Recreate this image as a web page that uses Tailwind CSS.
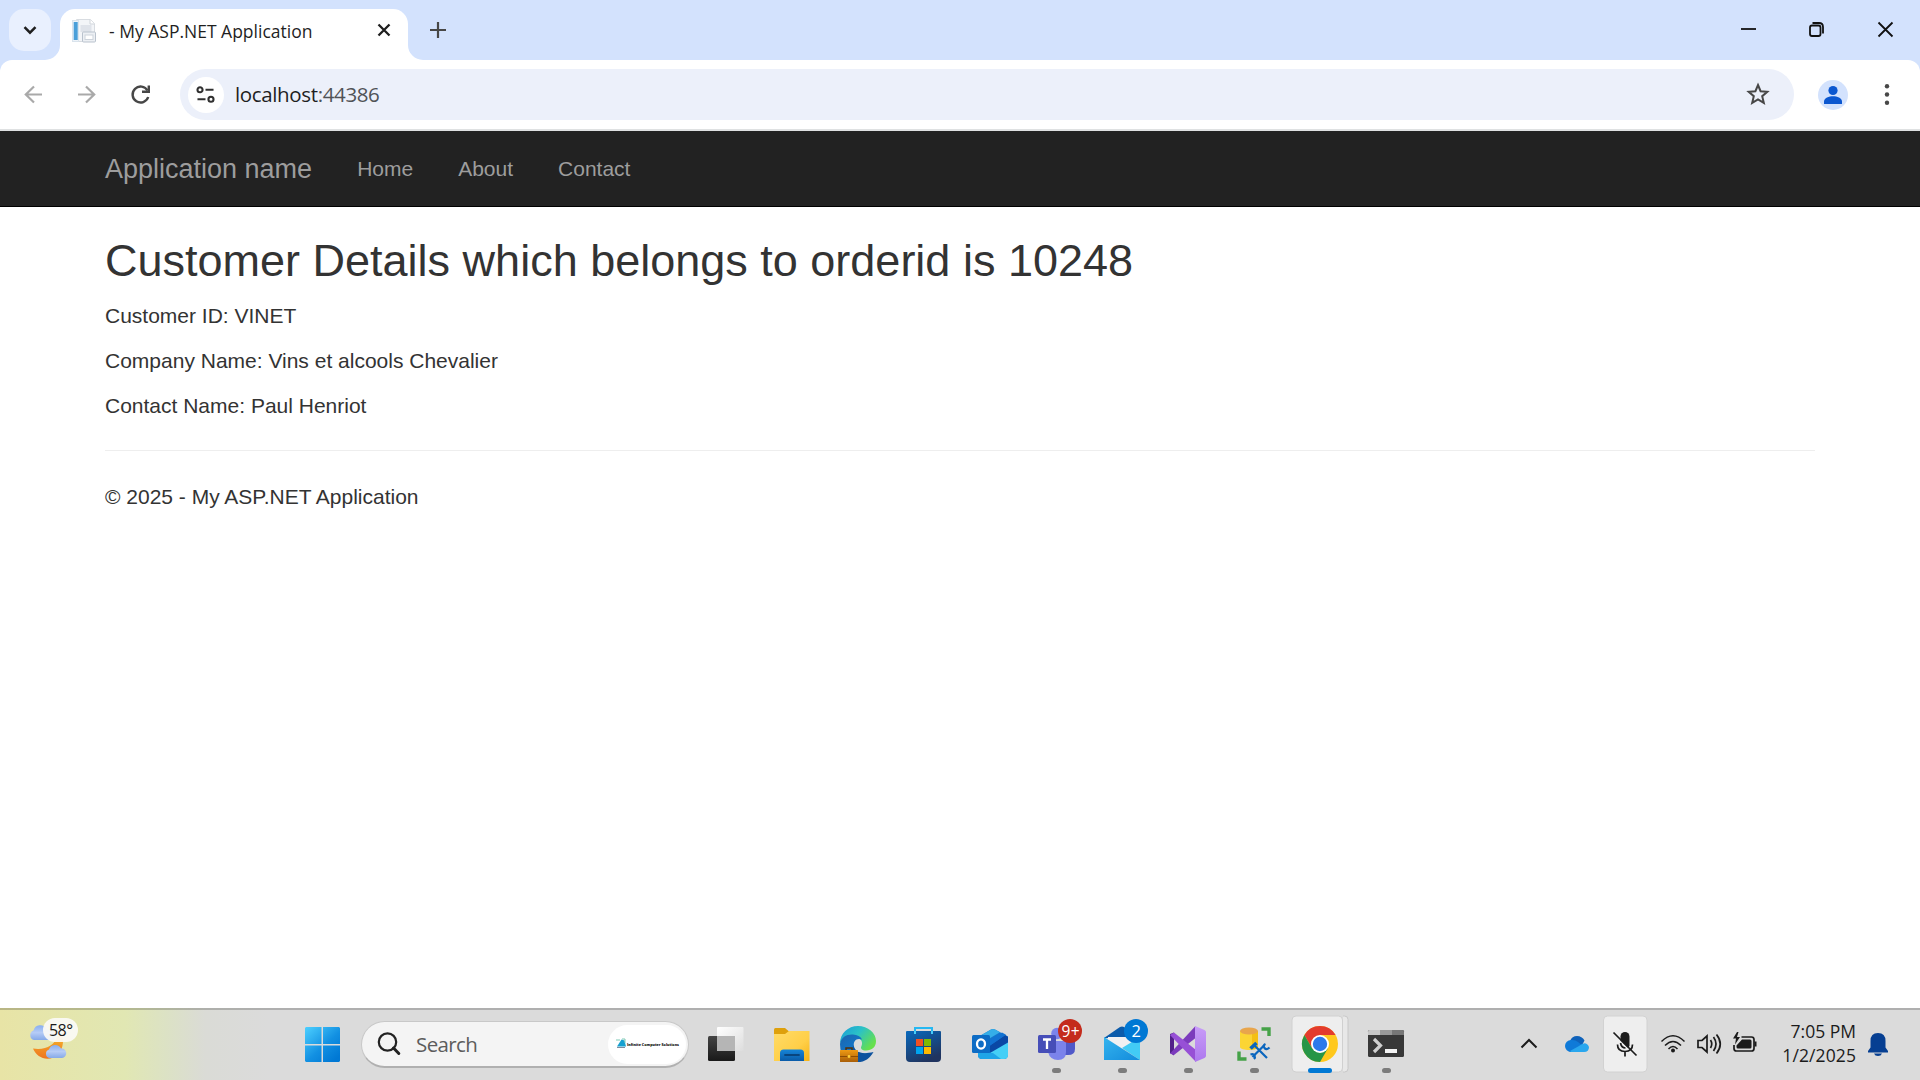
<!DOCTYPE html>
<html lang="en">
<head>
<meta charset="utf-8">
<title>- My ASP.NET Application</title>
<script src="https://cdn.jsdelivr.net/npm/@tailwindcss/browser@4"></script>
</head>
<body class="flex h-[1080px] w-[1920px] flex-col overflow-hidden bg-white font-['Open_Sans','Noto_Sans',sans-serif]">

<!-- Tab strip -->
<header class="flex h-[60px] shrink-0 bg-[#d3e2fd] pl-[9px]">
  <button class="mt-[9px] flex h-[42px] w-[42px] shrink-0 items-center justify-center rounded-[15px] bg-[#e9f0fe]">
    <svg class="h-3 w-4" viewBox="0 0 16 12" fill="none" stroke="#1f1f1f" stroke-width="2.5"><path d="M2.5 3.2 8 8.7l5.500-5.500"/></svg>
  </button>
  <svg class="-ml-[6px] h-[60px] w-[15px] shrink-0" viewBox="0 0 15 60"><path d="M15 45v15H0A15 15 0 0 0 15 45Z" fill="#fff"/></svg>
  <div class="mt-[9px] flex h-[51px] w-[348px] shrink-0 items-center rounded-t-[15px] bg-white pl-3 pr-[17px]">
    <svg class="-mt-[7px] h-6 w-6 shrink-0" viewBox="0 0 24 24">
      <path d="M4.500.500h14l4 4v18h-18z" fill="#f3f5f8" stroke="#d8dce1"/>
      <path d="M18 .500v4.500h4.500" fill="#fff" stroke="#cfd4da"/>
      <rect x=".5" y="1.500" width="6" height="21" fill="#edf3f9" stroke="#d9e3ec"/>
      <rect x="1.700" y="3" width="4" height="18" fill="#4a9fd9"/>
      <rect x="8.500" y="6" width="11" height="7" fill="#dfe3ea"/>
      <rect x="10.500" y="13" width="13" height="10" rx="1" fill="#edf0f4" stroke="#b9c2cd"/>
      <rect x="13" y="16" width="8" height="4.500" fill="#fff" stroke="#cdd3db"/>
    </svg>
    <span class="-mt-[6px] ml-[13px] flex-1 whitespace-nowrap text-[17.500px] text-[#1f1f1f]">- My ASP.NET Application</span>
    <svg class="-mt-[9px] h-[14px] w-[14px]" viewBox="0 0 14 14" stroke="#1f1f1f" stroke-width="2.300"><path d="m1.500 1.500 11 11m0-11-11 11"/></svg>
  </div>
  <svg class="h-[60px] w-[15px] shrink-0" viewBox="0 0 15 60"><path d="M0 45v15h15A15 15 0 0 1 0 45Z" fill="#fff"/></svg>
  <svg class="ml-[7px] mt-[22px] h-4 w-4" viewBox="0 0 16 16" stroke="#474747" stroke-width="2.200"><path d="M8 0v16M0 8h16"/></svg>
  <svg class="ml-auto h-[60px] w-[200px]" viewBox="1720 0 200 60" fill="none" stroke="#111" stroke-width="1.800">
    <path d="M1741 29h15"/>
    <rect x="1810" y="25.500" width="10.500" height="10.500" rx="2"/>
    <path d="M1812.500 23h6.500q4 0 4 4v6.500"/>
    <path d="m1878.500 22.500 14 14m0-14-14 14"/>
  </svg>
</header>

<!-- Toolbar -->
<div class="shrink-0 bg-[#d3e2fd]">
  <div class="flex h-[71px] items-start rounded-t-[12px] border-b-2 border-[#dfe1e2] bg-white pt-[9px]">
    <svg class="h-[50px] w-[180px] shrink-0" viewBox="0 69 180 50" fill="none" stroke-width="2.200">
      <path d="M42 94.500H26m8-8-8.200 8 8.200 8" stroke="#a9a9a9"/>
      <path d="M78 94.500h16m-8-8 8.200 8-8.200 8" stroke="#a9a9a9"/>
      <path d="M147.500 90.500a8 8 0 1 0 .700 6.500" stroke="#474747" stroke-width="2.400"/>
      <path d="M148.800 85.500v6.300h-6.800" stroke="#474747" stroke-width="2.400"/>
    </svg>
    <div class="flex h-[51px] w-[1614px] items-center rounded-full bg-[#ecf0fa] pl-2 pr-6">
      <div class="flex h-9 w-9 shrink-0 items-center justify-center rounded-full bg-white">
        <svg class="mr-px h-[17px] w-[19px]" viewBox="0 0 20 18" fill="none" stroke="#303030" stroke-width="2.200"><circle cx="4.200" cy="4" r="2.700"/><path d="M10 4h8.500M1.500 14H10"/><circle cx="15.800" cy="14" r="2.700"/></svg>
      </div>
      <div class="ml-[11px] flex-1 text-[20.500px] tracking-[-0.360px] text-[#1f1f1f]">localhost<span class="text-[#505357]">:44386</span></div>
      <svg class="-mt-px h-6 w-6" viewBox="0 0 24 24" fill="none" stroke="#474747" stroke-width="2"><path d="m12 3 2.600 6.200 6.700.600-5.100 4.400 1.600 6.600L12 17.300l-5.800 3.500 1.600-6.600-5.100-4.400 6.700-.600Z"/></svg>
    </div>
    <svg class="h-[50px] w-[126px] shrink-0" viewBox="1794 69 126 50">
      <circle cx="1833" cy="95" r="15" fill="#d3e2fd"/>
      <circle cx="1833" cy="90.500" r="4.600" fill="#0b57d0"/>
      <path d="M1824 104v-2.500c0-3.500 5-5.200 9-5.200s9 1.700 9 5.200v2.500z" fill="#0b57d0"/>
      <g fill="#474747"><circle cx="1887" cy="86.300" r="2.200"/><circle cx="1887" cy="94.500" r="2.200"/><circle cx="1887" cy="102.800" r="2.200"/></g>
    </svg>
  </div>
</div>

<!-- Page -->
<div class="flex min-h-0 flex-1 flex-col font-['Liberation_Sans',Arial,sans-serif] text-[21px] leading-[30px] text-[#333]">
  <nav class="flex h-[76px] shrink-0 items-center border-b border-black bg-[#222] pl-[105px] text-[#9d9d9d]">
    <a class="text-[27px]">Application name</a>
    <a class="ml-[45px]">Home</a>
    <a class="ml-[45px]">About</a>
    <a class="ml-[45px]">Contact</a>
  </nav>
  <main class="px-[105px]">
    <h2 class="mt-[29px] text-[45px] leading-[49px]">Customer Details which belongs to orderid is 10248</h2>
    <p class="mt-4">Customer ID: VINET</p>
    <p class="mt-[15px]">Company Name: Vins et alcools Chevalier</p>
    <p class="mt-[15px]">Contact Name: Paul Henriot</p>
    <hr class="mt-[29px] border-[#eee]">
    <footer class="mt-[31px]">© 2025 - My ASP.NET Application</footer>
  </main>
</div>

<!-- Taskbar -->
<div class="flex h-[72px] shrink-0 border-t-2 border-black/20 bg-[#dbdbdb] bg-[linear-gradient(90deg,#e8e4a6_0px,#e1e7b3_125px,#dce2c4_165px,#dadbd6_205px,#dbdbdb_270px)]">
  <svg class="h-[70px] w-[292px] shrink-0" viewBox="0 1010 292 70">
    <defs>
      <linearGradient id="cloud" x2="0" y2="1"><stop stop-color="#88aef0"/><stop offset=".5" stop-color="#b6ccf6"/><stop offset="1" stop-color="#86a9e8"/></linearGradient>
      <linearGradient id="moon" x2="0" y2="1"><stop stop-color="#f5b32a"/><stop offset="1" stop-color="#ee7420"/></linearGradient>
    </defs>
    <path d="M34 1040a5 5 0 0 1-.500-9.500 7 7 0 0 1 13-1.500l8 3v8z" fill="url(#cloud)"/>
    <path d="M62.500 1036c2 10-2 18-9 21.500-9 3.500-17-1-20.500-9 12 2 22-3 24-12.500z" fill="url(#moon)"/>
    <path d="M49 1058a4.500 4.500 0 0 1 0-8.500 6.500 6.500 0 0 1 12-1 4.700 4.700 0 0 1 1 9.500z" fill="url(#cloud)"/>
    <rect x="43" y="1018" width="35" height="24" rx="12" fill="#fbfaf6" fill-opacity=".93"/>
    <text x="49" y="1036" font-size="16" textLength="24" fill="#1a1a1a">58°</text>
  </svg>
  <svg class="h-[70px] w-[69px] shrink-0" viewBox="292 1010 69 70">
    <defs><linearGradient id="win" gradientUnits="userSpaceOnUse" x1="305" y1="1027" x2="335" y2="1060"><stop stop-color="#4dd0ff"/><stop offset=".6" stop-color="#1290e2"/><stop offset="1" stop-color="#0078d4"/></linearGradient></defs>
    <path d="M306 1027h15.500v17H305v-16zM323 1027h16l1 1v16h-17zM305 1045.500h16.500v16.500H306l-1-1zM323 1045.500h17v15.500l-1 1h-16z" fill="url(#win)"/>
  </svg>
  <div class="mt-[11px] flex h-[47px] w-[328px] shrink-0 items-center rounded-full border border-b-2 border-[#c8c8c8] border-b-[#b0b0b0] bg-[#f4f4f4] pl-[15px] pr-[2px]">
    <svg class="h-6 w-6" viewBox="0 0 24 24" fill="none" stroke="#222"><circle cx="10.500" cy="10" r="8.700" stroke-width="2.200"/><path d="m16.500 16 5.300 5.500" stroke-width="3" stroke-linecap="round"/></svg>
    <span class="ml-[15px] flex-1 text-[20.500px] tracking-[-0.600px] text-[#5c5c5c]">Search</span>
    <div class="flex h-[39px] w-[78px] items-center rounded-full bg-white pl-2">
      <svg class="h-5 w-[69px] overflow-visible" viewBox="616 1035 69 20">
        <path d="m621.500 1040.500-4.500 7h9l-1.500-6z" fill="#16a0d0"/><path d="M616 1041h4m2-1h3v4" fill="none" stroke="#7cc9b4"/><path d="M617 1048.500h8" stroke="#7d8ca0"/>
        <text x="627" y="1046.500" font-size="4.200" font-weight="800" textLength="52" lengthAdjust="spacingAndGlyphs" fill="#111">Infinite Computer Solutions</text>
      </svg>
    </div>
  </div>
  <div class="ml-[3px] flex shrink-0">
    <svg class="h-[70px] w-[66px]" viewBox="692 1010 66 70">
      <defs><linearGradient id="tvd" x2="0" y2="1"><stop stop-color="#444"/><stop offset="1" stop-color="#191919"/></linearGradient><linearGradient id="tvl" x2="1" y2="1"><stop stop-color="#fff"/><stop offset="1" stop-color="#ddd"/></linearGradient></defs>
      <rect x="708" y="1036" width="27" height="25" rx="1.500" fill="url(#tvd)"/><rect x="717" y="1027" width="26.500" height="24" rx="1" fill="url(#tvl)"/><path d="M717 1036h18v15h-18z" fill="#b5b5b5"/>
    </svg>
    <svg class="h-[70px] w-[66px]" viewBox="758 1010 66 70">
      <defs><linearGradient id="fold" x2="1" y2="1"><stop stop-color="#ffdb68"/><stop offset=".6" stop-color="#ffcf48"/><stop offset="1" stop-color="#f6b315"/></linearGradient><linearGradient id="fb" x2="0" y2="1"><stop stop-color="#1685d8"/><stop offset="1" stop-color="#0a5ba8"/></linearGradient></defs>
      <path d="M774 1036v-6.500q0-1.500 1.500-1.500H785l4 3.500v4.500z" fill="#dea00c"/><path d="M774 1034h11l4-3h20.500v30H774z" fill="url(#fold)"/>
      <path d="M780 1061v-8q0-3.500 3.500-3.500h17q3.500 0 3.500 3.500v8z" fill="url(#fb)"/><path d="M785 1055h14" stroke="#09457e" stroke-width="1.800" stroke-linecap="round"/>
    </svg>
    <svg class="h-[70px] w-[66px]" viewBox="824 1010 66 70">
      <defs><linearGradient id="e1" x2="1" y2=".6"><stop stop-color="#189bd8"/><stop offset=".5" stop-color="#2bc1c7"/><stop offset="1" stop-color="#66e04c"/></linearGradient><linearGradient id="e2" x2=".8" y2="1"><stop stop-color="#1c65ad"/><stop offset="1" stop-color="#0d82dc"/></linearGradient><linearGradient id="bag" x2="0" y2="1"><stop stop-color="#ee9a13"/><stop offset="1" stop-color="#a95e08"/></linearGradient></defs>
      <path d="M858 1026c10 0 18 7 18 15 0 6-4 9.500-10 9.500-4 0-6-2-4.500-4.500 1.500-3.500 0-7-4-8-6-2-14-1-17.500 5.500 0-10 8-17.500 18-17.500z" fill="url(#e1)"/>
      <path d="M840 1044c1-7 7-10 13-9.500 4 .200 8 2 9 5-6-2-9 2-8 7 1 5 6 7.500 12 7l-5 7h-15q-6-7-6-16.500z" fill="url(#e2)"/>
      <path d="M853 1045c2 7 8 10 20.500 7-4 7-9 10.500-17.500 10h-4z" fill="#0d529e"/>
      <path d="M846 1050v-2h6v2" fill="none" stroke="#543008" stroke-width="1.500"/><rect x="840" y="1050" width="18" height="12" rx=".5" fill="url(#bag)"/><path d="M840 1056.500h18" stroke="#8d4d04"/><circle cx="849" cy="1056.500" r="1.400" fill="#ffd13a"/>
    </svg>
    <svg class="h-[70px] w-[66px]" viewBox="890 1010 66 70">
      <defs><linearGradient id="st" x2=".5" y2="1"><stop stop-color="#0869bd"/><stop offset="1" stop-color="#20345f"/></linearGradient></defs>
      <path d="M915 1034v-6h17v6" fill="none" stroke="#25b8f2" stroke-width="2"/><path d="M906 1032q0-1 1-1h33q1 0 1 1v26q0 4-4 4h-27q-4 0-4-4z" fill="url(#st)"/><path d="M915 1031v3m17-3v3" stroke="#48cdf8" stroke-width="2"/>
      <path d="M916 1039h7v7h-7z" fill="#f25022"/><path d="M924 1039h7v7h-7z" fill="#7fba00"/><path d="M916 1047h7v7h-7z" fill="#00a4ef"/><path d="M924 1047h7v7h-7z" fill="#ffb900"/>
    </svg>
    <svg class="h-[70px] w-[66px]" viewBox="956 1010 66 70">
      <path d="M978 1037l13-7.500q2-1 4 0l13 7v17.500q0 5-4 5h-22q-4 0-4-4z" fill="#1475cc"/><path d="m979 1036.500 12-7q2-1 4 0l5 2.800-17 10z" fill="#35aee8"/>
      <path d="m988 1047 17-12 3 2v7l-17 10z" fill="#0a48a5"/><path d="m987 1042 15-9.500 4 2.300-17 11.500z" fill="#1272d2"/>
      <path d="m990 1053 18-10.500v12.500q0 4-4 4h-14z" fill="#45cff6"/><path d="M978 1053h15l8 6h-19q-4 0-4-4z" fill="#1fa5e8"/>
      <rect x="972" y="1035" width="18" height="18" rx="1.500" fill="#0d6cc5"/><ellipse cx="981" cy="1044" rx="4" ry="4.700" fill="none" stroke="#fff" stroke-width="2.300"/>
    </svg>
    <svg class="h-[70px] w-[66px]" viewBox="1022 1010 66 70">
      <circle cx="1057" cy="1033.500" r="5.800" fill="#7b83eb"/><path d="M1059 1041h16v8q0 6-7 6h-7z" fill="#5059c9"/><path d="M1048 1041h18v11q0 8-8 8t-10-8z" fill="#7b83eb"/>
      <rect x="1038" y="1035" width="18" height="18" rx="1.500" fill="#464eb8"/><path d="M1043 1039.500h8m-4 0v9.500" stroke="#fff" stroke-width="2.300"/>
      <circle cx="1070" cy="1031" r="12" fill="#c42b1c"/><text x="1061.500" y="1036.500" font-size="15.500" textLength="18" fill="#fff">9+</text><rect x="1052" y="1068" width="9" height="5" rx="2.500" fill="#7c7c7c"/>
    </svg>
    <svg class="h-[70px] w-[66px]" viewBox="1088 1010 66 70">
      <defs><linearGradient id="ml" x2="1" y2="1"><stop stop-color="#35b4ee"/><stop offset="1" stop-color="#128bdc"/></linearGradient></defs>
      <path d="m1104 1038 16-11q2-1 4 0l16 11z" fill="#0b5bab"/><path d="M1108 1037h28v12h-28z" fill="#f0f0f2"/><path d="m1140 1037-18 11 18 12z" fill="#42cbf5"/><path d="m1104 1037 36 23h-36z" fill="url(#ml)"/>
      <circle cx="1136" cy="1031" r="12" fill="#0078d4"/><text x="1131.500" y="1037" font-size="16.500" fill="#fff">2</text><rect x="1118" y="1068" width="9" height="5" rx="2.500" fill="#7c7c7c"/>
    </svg>
    <svg class="h-[70px] w-[66px]" viewBox="1154 1010 66 70">
      <defs><linearGradient id="vs" x2="0" y2="1"><stop stop-color="#c89cf8"/><stop offset="1" stop-color="#ad78ee"/></linearGradient></defs>
      <path d="m1170 1034 4-1.500v23l-4-2.500z" fill="#52218a"/><path d="m1170 1053.500 25.500-27.500v12L1174 1055z" fill="#7c3bbd"/><path d="m1170 1035 4-2.500 22 17.500v12z" fill="#9750d6"/><path d="m1195 1026 9.500 4q1.500 1 1.500 2v24q0 1-1.500 2l-9.500 4z" fill="url(#vs)"/><rect x="1184" y="1068" width="9" height="5" rx="2.500" fill="#7c7c7c"/>
    </svg>
    <svg class="h-[70px] w-[66px]" viewBox="1220 1010 66 70">
      <path d="M1240 1031v16c0 4 18 4 18 0v-16z" fill="#fbd534"/><path d="M1252 1031h6v16q-1 2-6 2.500z" fill="#f4bf14"/><ellipse cx="1249" cy="1031" rx="9" ry="3.500" fill="#e8a54c"/>
      <path d="M1261.500 1029h7.500v7M1239 1051.500v7.500h7.500" fill="none" stroke="#45a248" stroke-width="3.400"/>
      <g fill="none" stroke="#0b66be" stroke-width="2.200"><path d="m1252.500 1057 11.500-11.500M1254.500 1045.500l12.500 12.500"/><path d="m1250.500 1048.500 6-5.500" stroke-width="3.600"/><path d="M1265.500 1044q-3 1.500-1 4t5-.500M1250.500 1054.500q3-1 4 1t-.500 3.500"/></g>
      <rect x="1250" y="1068" width="9" height="5" rx="2.500" fill="#7c7c7c"/>
    </svg>
    <svg class="h-[70px] w-[66px]" viewBox="1286 1010 66 70">
      <path d="M1343 1016h1.500q3.500 0 3.500 3.500v49q0 3.500-3.500 3.500h-1.500" fill="#e8e8e8" stroke="#c8c8c8"/><rect x="1292" y="1016" width="50.500" height="56" rx="4" fill="#eee" stroke="#d0d0d0"/>
      <circle cx="1320" cy="1044" r="18" fill="#ffc81d"/><path d="M1304.400 1035A18 18 0 0 1 1335.600 1035H1320L1312.200 1048.500Z" fill="#e33b2e"/><path d="M1304.400 1035A18 18 0 0 0 1320 1062L1327.800 1048.500 1312.200 1048.500Z" fill="#269547"/>
      <circle cx="1320" cy="1044" r="9" fill="#fff"/><circle cx="1320" cy="1044" r="7.200" fill="#2d79eb"/><rect x="1308" y="1068" width="24" height="5" rx="2.500" fill="#0078d4"/>
    </svg>
    <svg class="h-[70px] w-[66px]" viewBox="1352 1010 66 70">
      <rect x="1368" y="1030" width="36" height="27" rx="1.500" fill="#383838"/><path d="M1368 1031.500q0-1.500 1.500-1.500H1380v5h-12z" fill="#c7c7c7"/><path d="M1380 1030h12v5h-12z" fill="#999"/><path d="M1392 1030h10.500q1.500 0 1.500 1.500v3.500h-12z" fill="#777"/>
      <path d="m1374 1039 6.500 6.500-6.500 6.500" fill="none" stroke="#d0d0d0" stroke-width="3.200"/><path d="M1385 1051h12" stroke="#f4f4f4" stroke-width="4"/><rect x="1382" y="1068" width="9" height="5" rx="2.500" fill="#7c7c7c"/>
    </svg>
  </div>
  <svg class="ml-auto h-[70px] w-[270px] shrink-0" viewBox="1500 1010 270 70" fill="none" stroke="#1b1b1b" stroke-width="1.700">
    <path d="m1521.500 1047.500 7.500-7.500 7.500 7.500" stroke-width="2"/>
    <g stroke="none"><path d="M1571 1052a6 6 0 0 1-1-11q2-5 7-5t7.500 4.500l-6 11.500z" fill="#0f62ba"/><path d="M1571 1052a6 6 0 0 1 0-12q4-.500 7 2l5 4-8 6z" fill="#0f7ad8"/><path d="m1570 1051 9-5q7-6 10 1 0 5-5 5h-13z" fill="#2aa7ee"/></g>
    <rect x="1603.500" y="1016" width="43.500" height="56" rx="4" fill="#eee" stroke="#d2d2d2" stroke-width="1"/>
    <path d="M1620.500 1036.500a4.500 4.500 0 0 1 9 0v9q0 2-2 2l-7-7z" fill="#1b1b1b" stroke="none"/><path d="M1617.500 1044.500q0 7 7.500 7t7.500-7M1625 1052v4.500M1613.500 1032.500l23 23"/>
    <path d="M1620.500 1043q1 5 5 5" />
    <path d="M1661.500 1041.500q11.500-11.500 23 0M1665 1045.500q8-8 16 0M1668.500 1049q4.500-5 9 0" stroke-width="1.500"/><circle cx="1673" cy="1050.500" r="2" fill="#1b1b1b" stroke="none"/>
    <path d="M1698 1040.500h4l5-4.500v16l-5-4.500h-4zM1710.500 1040q2.500 4 0 8M1713.500 1037q5 7 0 14M1716.500 1034.500q7.500 9.500 0 19"/>
    <path d="M1741.500 1037h10q2.500 0 2.500 2.500v9q0 2.500-2.500 2.500h-15q-2.500 0-2.500-2.500v-3.500"/><path d="M1742 1039.500h8q1.500 0 1.500 1.500v6q0 1.500-1.500 1.500h-12q-1.500 0-1.500-1.500v-1.500zM1754.500 1041.500h2v5h-2zM1737 1032l-4 6.500h3l-1 6 5-7.500h-3l1.500-5z" fill="#1b1b1b" stroke="none"/>
  </svg>
  <div class="flex w-[86px] shrink-0 flex-col items-end pt-[9px] text-[17.500px] leading-6 text-[#1b1b1b]"><span>7:05 PM</span><span class="tracking-[0.100px]">1/2/2025</span></div>
  <svg class="h-[70px] w-16 shrink-0" viewBox="1856 1010 64 70" fill="#063f92"><path d="M1870.500 1041q0-8 7.500-8t7.500 8v6.500l2.500 3.500v1.500h-20v-1.500l2.500-3.500zM1874 1053.500h8q-1 2.500-4 2.500t-4-2.500z"/></svg>
</div>
</body>
</html>
